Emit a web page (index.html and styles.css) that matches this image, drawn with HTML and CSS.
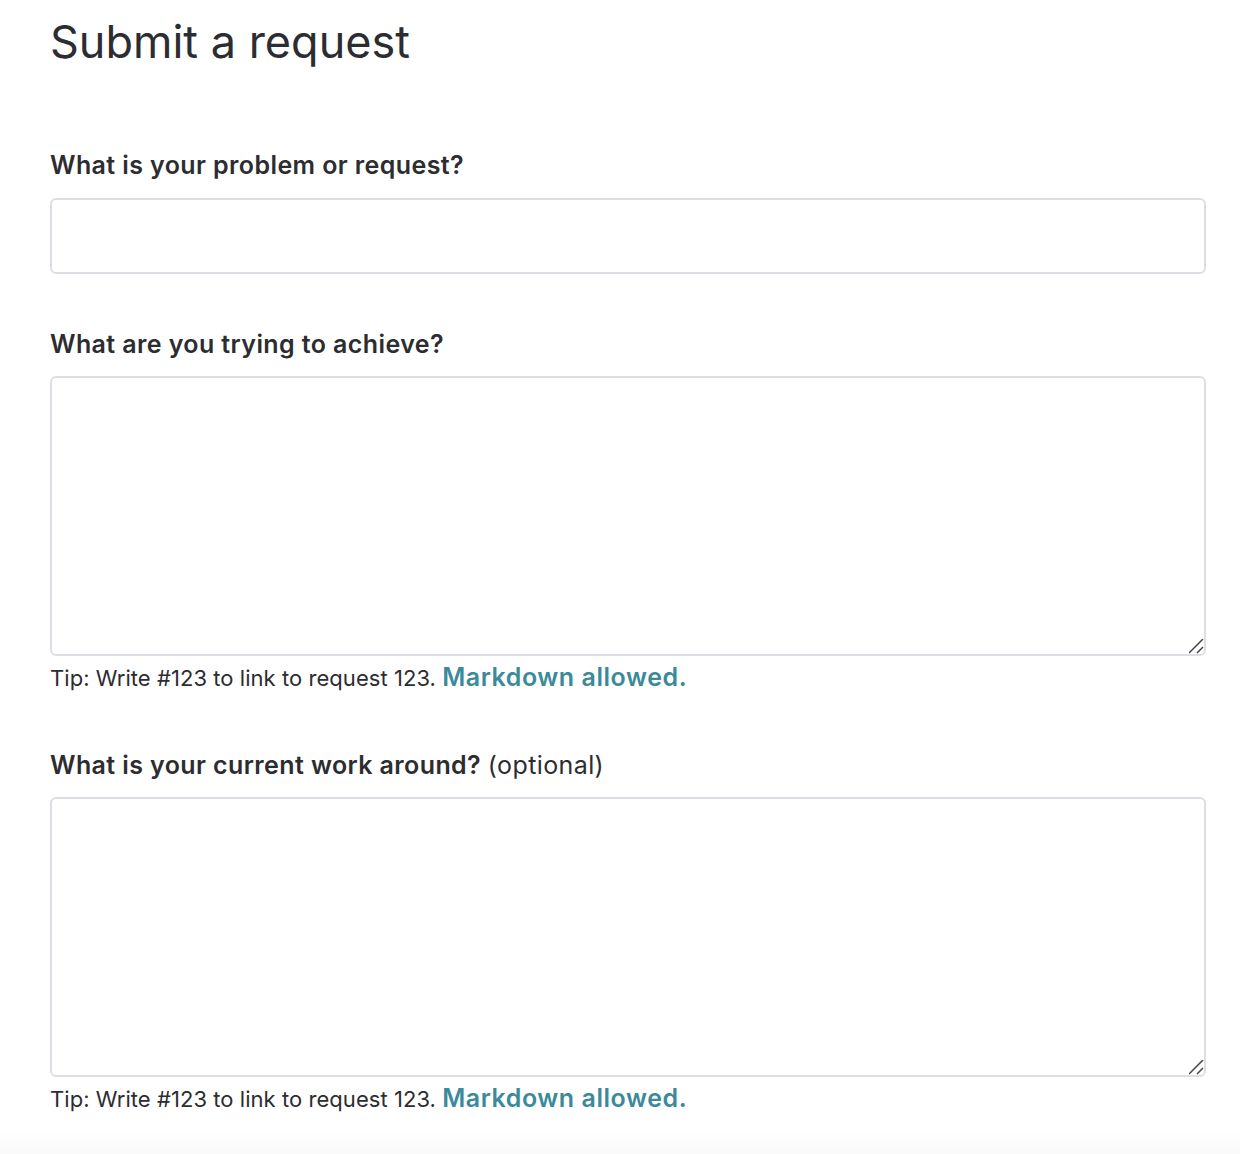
FILE: index.html
```html
<!DOCTYPE html>
<html lang="en">
<head>
<meta charset="utf-8">
<title>Submit a request</title>
<link rel="stylesheet" href="styles.css">
</head>
<body>
<main class="page">
  <h1 class="title">Submit a request</h1>
  <form class="form">
    <div class="field">
      <label class="label" for="f1">What is your problem or request?</label>
      <input class="input" id="f1" type="text">
    </div>
    <div class="field">
      <label class="label" for="f2">What are you trying to achieve?</label>
      <textarea class="textarea" id="f2"></textarea>
      <p class="tip">Tip: Write #123 to link to request 123. <a class="tip-link" href="#">Markdown allowed.</a></p>
    </div>
    <div class="field">
      <label class="label" for="f3">What is your current work around? <span class="optional">(optional)</span></label>
      <textarea class="textarea" id="f3"></textarea>
      <p class="tip">Tip: Write #123 to link to request 123. <a class="tip-link" href="#">Markdown allowed.</a></p>
    </div>
  </form>
</main>
<div class="fade"></div>
</body>
</html>
```

FILE: styles.css
```css
html, body {
  margin: 0;
  padding: 0;
  background: #fff;
}
body {
  font-family: Inter, Lato, "Liberation Sans", sans-serif;
  color: #2c2d31;
  min-height: 1154px;
  position: relative;
}
.page {
  padding: 12px 34px 0 50px;
}
.title {
  margin: 0;
  font-size: 45px;
  font-weight: 400;
  line-height: 60px;
  color: #2c2d31;
}
.form {
  display: flex;
  flex-direction: column;
  margin-top: 76px;
}
.field {
  display: flex;
  flex-direction: column;
  margin-bottom: 53px;
}
.label {
  font-size: 25px;
  font-weight: 600;
  line-height: 34px;
  letter-spacing: 0.4px;
  margin-bottom: 16px;
}
.optional {
  font-weight: 400;
}
.input, .textarea {
  box-sizing: border-box;
  width: 1156px;
  border: 2px solid #dcdee3;
  border-radius: 6px;
  background: #fff;
  font: inherit;
  margin: 0;
}
.input {
  height: 76px;
}
.textarea {
  height: 280px;
  margin-top: -1px;
  resize: vertical;
}
.textarea::-webkit-resizer {
  background: url("data:image/svg+xml,%3Csvg xmlns='http://www.w3.org/2000/svg' width='16' height='16'%3E%3Cpath d='M1 15L15 1M9 15L15 9' stroke='%23444' stroke-width='1.5' fill='none'/%3E%3C/svg%3E") no-repeat right bottom;
}
.tip {
  margin: 4px 0 0;
  font-size: 22px;
  line-height: 34px;
  letter-spacing: 0.05px;
}
.tip-link {
  color: #3b8a9b;
  font-weight: 600;
  font-size: 25px;
  letter-spacing: 0.55px;
  text-decoration: none;
}
.fade {
  position: absolute;
  left: 0;
  right: 0;
  bottom: 0;
  height: 40px;
  background: linear-gradient(#fff, #f7f7f7);
}
```
